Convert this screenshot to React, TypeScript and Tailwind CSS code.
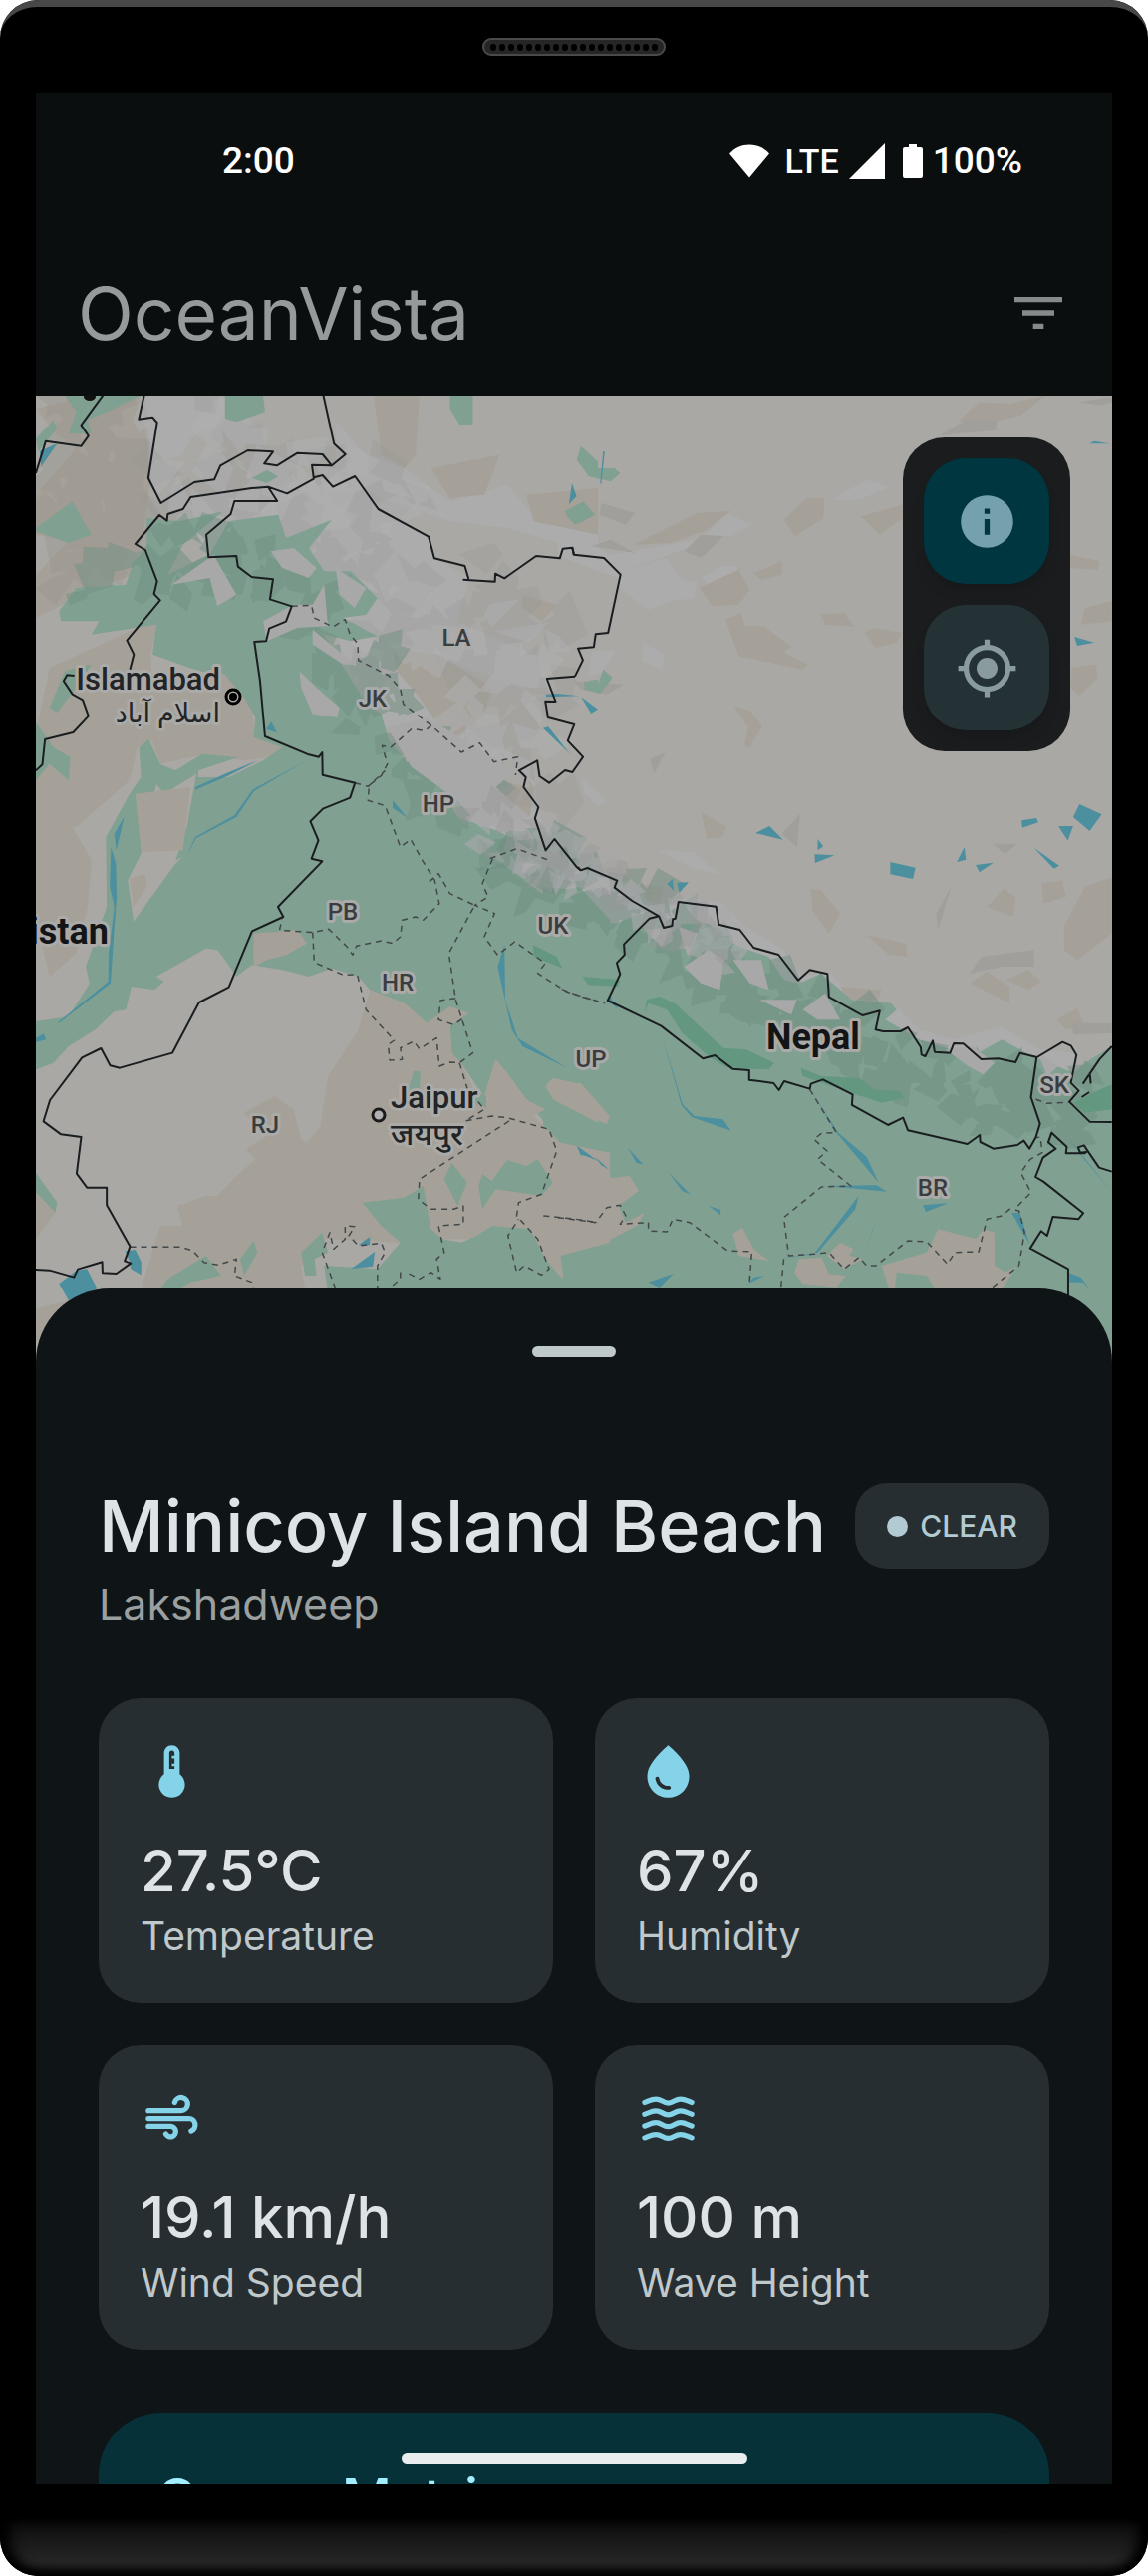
import type { ReactNode } from "react";
import { MdFilterList, MdInfo, MdMyLocation, MdThermostat, MdWaterDrop } from "react-icons/md";

/* ---------- Map ---------- */

// The map is surveyed in two sheets, west and east, each with its own grid.
const WEST = "translate(0 390) scale(0.38265 0.33333)";
const EAST = "translate(560 390) scale(0.37755 0.33333)";

const toPath = (shapes: string[], close: boolean) =>
  shapes.map((s) => `M${s}${close ? "Z" : ""}`).join(" ");

function Areas({ west = [], east = [], fill, opacity = 1 }: { west?: string[]; east?: string[]; fill: string; opacity?: number }) {
  return (
    <g fill={fill} opacity={opacity}>
      <path transform={WEST} d={toPath(west, true)} />
      <path transform={EAST} d={toPath(east, true)} />
    </g>
  );
}

function Lines({ west, east, stroke, width, dash }: { west: string[]; east: string[]; stroke: string; width: number; dash?: string }) {
  return (
    <g fill="none" stroke={stroke} strokeWidth={width} strokeDasharray={dash} strokeLinejoin="round">
      <path transform={WEST} d={toPath(west, false)} vectorEffect="non-scaling-stroke" />
      <path transform={EAST} d={toPath(east, false)} vectorEffect="non-scaling-stroke" />
    </g>
  );
}

// Scatters small relief facets along a mountain spine.
function facets(seed: number, spine: number[][], spread: number, count: number, size: number) {
  let s = seed;
  const rnd = () => {
    s = (s * 16807) % 2147483647;
    return s / 2147483647;
  };
  const out: string[] = [];
  for (let i = 0; i < count; i++) {
    const k = Math.floor(rnd() * (spine.length - 1));
    const t = rnd();
    const x = spine[k][0] + (spine[k + 1][0] - spine[k][0]) * t + (rnd() - 0.5) * spread;
    const y = spine[k][1] + (spine[k + 1][1] - spine[k][1]) * t + (rnd() - 0.5) * spread;
    const pts: string[] = [];
    const turn = rnd() * 6;
    for (let j = 0; j < 4; j++) {
      const a = turn + j * 1.5 + rnd();
      const r = size * (0.3 + rnd());
      pts.push(`${Math.round(x + Math.cos(a) * r)},${Math.round(y + Math.sin(a) * r)}`);
    }
    out.push(`M${pts.join("L")}Z`);
  }
  return out.join("");
}

const karakoram = [[200, 440], [270, 500], [350, 540], [430, 610], [500, 680], [530, 740]];
const hindukush = [[60, 420], [110, 480], [60, 560], [140, 520]];
const kashmir = [[90, 600], [170, 560], [240, 560], [300, 600], [350, 660], [400, 730], [470, 810], [540, 860]];
const nepal = [[510, 870], [600, 890], [660, 930], [720, 970], [780, 1010], [850, 1040], [930, 1080], [1000, 1100], [1100, 1110]];
const himal = [[480, 810], [540, 860], [600, 880], [650, 910], [730, 950]];

const SNOW_W = [
  "380,20 690,20 620,80 500,150 480,200 400,230",
  "430,450 500,330 700,300 830,270 930,265 1000,360 1120,440 1140,510 1230,570 1200,700 1400,800 1450,900 1360,900 1200,830 1050,780 1100,900 1290,1080 1400,1180 1420,1300 1520,1440 1568,1500 1568,1620 1400,1500 1280,1420 1000,1000 900,830 850,550 750,440",
  "880,100 960,200 1060,240 1180,340 1330,290 1400,380 1568,420 1568,520 1480,470 1330,420 1180,400 1000,330 880,260",
];
const SNOW_E = [
  "-40,1380 60,1440 160,1480 270,1570 320,1535 430,1545 500,1620 600,1690 650,1770 720,1755 800,1850 900,1860 960,1930 1050,1960 1180,1920 1280,1990 1380,2000 1360,2060 1100,2040 900,1960 700,1900 560,1800 400,1700 60,1620 -40,1560",
  "160,560 230,530 290,510 330,580 370,580 360,630 300,640 240,665 160,600",
  "0,450 60,450 140,500 440,440 200,540 160,570 60,530 0,500",
  "390,440 450,375 515,410 460,445",
  "380,570 430,535 480,535 460,575 400,590",
  "725,335 820,275 880,297 800,335",
  "265,1390 360,1395 430,1465 350,1440",
  "60,1170 130,1240 110,1260 70,1220",
  "225,765 285,800 275,845 225,820",
  "80,870 90,790 155,790 120,850",
];
const TAN_W = [
  "94,60 240,20 350,20 380,100 395,280 380,400 350,560 250,600 94,690 94,560 180,460 94,440 94,320 200,180 150,140",
  "130,840 400,700 410,720 395,800 400,900 600,860 660,960 670,1050 750,1080 700,1110 640,1120 540,1100 420,1130 400,1060 360,1080 340,1180 200,1320 94,1300 94,1040",
  "94,1200 180,1300 240,1420 230,1560 200,1700 130,1770 94,1600",
  "980,20 1100,20 1090,200 1060,240 1000,200",
  "1130,240 1310,200 1270,320 1180,330",
  "1030,780 1150,800 1290,900 1270,980 1180,1070 1100,930 1040,850",
  "1370,620 1460,650 1420,700 1370,660",
  "1250,1160 1350,1110 1400,1200 1390,1290 1310,1230",
  "1380,320 1568,300 1568,440 1400,400",
];
const TAN_E = [
  "1065,95 1120,40 1200,45 1295,20 1230,80 1100,115",
  "600,395 660,330 708,330 705,390 630,445",
  "520,555 595,520 595,560 540,575",
  "375,600 480,545 510,605 480,650 410,655",
  "445,695 487,675 497,715 545,715 620,775 600,795 665,830 650,845 480,805",
  "697,680 760,675 787,717 710,710",
  "805,385 915,350 915,390 855,440",
  "815,735 840,720 915,735 900,765 845,780",
  "468,955 510,970 543,1015 510,1080 495,1075 505,1020",
  "380,1275 450,1320 435,1350 395,1355",
  "1360,500 1440,520 1435,545 1360,540",
  "1365,840 1430,830 1435,870 1385,925 1362,900",
  "200,470 370,375 460,368 390,430 300,465",
  "1400,660 1472,640 1472,700 1390,710",
  "672,1505 700,1510 750,1580 720,1640 675,1570",
  "1140,1560 1185,1505 1215,1530 1210,1590",
  "1285,1490 1340,1480 1350,1530 1290,1550",
  "820,1645 925,1670 928,1710 880,1705",
  "1345,1620 1400,1500 1472,1470 1472,1640 1380,1720 1345,1690",
  "1095,1790 1140,1755 1200,1800 1200,1850",
  "1190,1780 1250,1750 1285,1785 1250,1810",
  "750,1800 860,1810 850,1840 770,1840",
  "1325,1900 1380,1865 1400,1920 1350,1930",
  "100,1440 150,1410 190,1480 150,1490",
  "220,1490 280,1500 270,1550 235,1540",
];
const SHADE_E = [
  "1015,140 1090,90 1165,95 1165,125",
  "1385,40 1472,25 1472,40 1440,50",
  "335,490 380,440 440,445 380,510",
  "115,345 205,375 180,410 110,380",
  "90,475 140,455 205,495",
  "245,1115 285,1095 255,1160",
  "595,1340 643,1280 635,1380",
  "1155,1370 1220,1370 1188,1402",
  "1095,1760 1125,1710 1265,1690 1265,1740 1180,1740",
  "1010,1630 1005,1580 1045,1500",
  "1365,1910 1472,1910 1472,1940 1370,1945",
  "40,880 175,890 130,920 60,905",
];
const GREEN_W = [
  "385,390 470,400 585,370 480,470 440,560 550,500 600,400 730,380 750,450 870,395 810,480 850,550 920,550 990,630 960,680 900,690 990,745 920,760 850,740 890,820 950,930 1000,980 1020,1060 1080,1140 1150,1190 1200,1290 1300,1330 1400,1380 1280,1400 1340,1450 1420,1520 1520,1500 1600,1600 1600,2290 1470,2270 1380,2140 1330,2060 1300,2020 1270,2130 1250,2100 1210,2030 1185,2000 1180,1920 1120,1910 1060,1850 970,1810 940,1770 870,1745 810,1770 740,1750 660,1735 620,1770 590,1720 570,1690 540,1685 410,1770 430,1785 405,1810 345,1800 330,1870 300,1875 250,1930 180,1980 140,2030 94,2050 94,1905 180,1890 235,1790 225,1740 280,1560 278,1350 340,1220 370,1170 365,1080 390,1055 420,1130 460,1150 530,1100 625,1110 520,1150 520,1170 600,1170 690,1120 740,1080 665,1050 670,990 640,930 590,860 520,850 400,800 410,710 240,740 260,700 160,700 155,670 200,600 330,590 350,520 385,480",
  "590,20 690,20 695,70 620,100 590,90",
  "1180,20 1240,20 1240,108 1205,108 1180,60",
  "170,20 370,20 290,65 230,95 240,135 180,135 200,70",
  "94,420 190,340 210,380 240,440 180,465 94,430",
  "1525,175 1568,220 1568,270 1515,220",
  "660,270 700,245 730,265 700,285",
  "94,1005 140,1080 185,1110 180,1180 130,1130 94,1180",
  "94,150 140,95 150,120 100,190",
  "130,960 170,850 240,830 200,900 150,975",
  "94,2360 150,2450 145,2480 94,2420",
  "1480,370 1530,340 1560,380 1520,405",
  "1540,880 1568,875 1568,905",
];
const GREEN_E = [
  "-40,1500 60,1510 60,1590 150,1610 250,1570 300,1640 330,1610 400,1610 480,1680 560,1710 600,1780 640,1790 700,1760 780,1840 885,1850 900,1870 870,1900 960,1960 1100,2010 1180,1960 1260,2010 1370,2060 1400,2030 1472,1980 1480,2900 -40,2900",
  "50,215 60,175 100,240 150,240 165,255 140,280 82,265",
  "20,380 65,345 95,380 45,410",
  "70,880 105,895 120,845 145,870 112,918 70,905",
];
const PLAIN_W = [
  "345,1480 480,1410 460,1430 350,1605",
  "410,1190 430,1220 515,1160 490,1320 455,1440 380,1530 350,1600 335,1480 370,1400",
];
const TAN2_W = [
  "970,1810 1060,1850 1120,1910 1180,1860 1230,1880 1180,1920 1185,2000 1210,2030 1250,2130 1270,2130 1300,2020 1330,2060 1380,2140 1430,2170 1400,2190 1470,2270 1600,2300 1600,2580 1480,2610 1478,2680 1380,2540 1230,2560 1100,2560 950,2450 1050,2570 850,2560 790,2640 800,2710 370,2710 420,2520 480,2520 465,2460 540,2430 570,2430 620,2370 670,2320 645,2290 700,2250 640,2180 720,2130 770,2170 790,2260 805,2270 840,2220 860,2070 940,1930",
  "665,1640 780,1630 805,1670 750,1705 700,1720 665,1740",
  "1430,2100 1450,2075 1510,2090 1568,2160 1568,2210 1450,2140",
  "355,1220 500,1200 480,1390 370,1395",
  "340,1475 380,1460 385,1500 350,1560",
  "94,2420 145,2480 94,2560",
  "94,2770 200,2740 160,2800 94,2870",
];
const TAN2_E = [
  "-60,2300 40,2300 80,2370 150,2375 190,2370 215,2415 160,2460 180,2510 230,2480 210,2520 90,2590 10,2640 15,2680 -60,2640",
  "0,2100 60,2090 137,2190 130,2215 60,2180",
  "465,2545 490,2525 520,2590 560,2625 480,2610",
  "640,2620 700,2615 720,2665 765,2670 740,2705 650,2695 628,2660",
  "860,2640 980,2600 1010,2530 1110,2560 1130,2530 1160,2540 1160,2640 1190,2660 1220,2640 1180,2710 1000,2705 980,2670 900,2660 895,2710 880,2710",
  "715,2610 750,2570 785,2590 775,2610 810,2620 760,2650",
];
const GREEN2_W = [
  "1085,2055 1103,2055 1100,2110 1070,2110",
  "1240,2110 1275,2130 1275,2165 1230,2140",
  "1165,2380 1185,2330 1225,2390 1200,2460",
  "1255,2400 1265,2365 1290,2385 1330,2322 1380,2340 1410,2320 1450,2390 1420,2430 1300,2410 1265,2470",
  "950,2450 1060,2435 1110,2400 1130,2530 1160,2560 1210,2570 1250,2550 1290,2520 1390,2530 1430,2620 1478,2685 1470,2610 1600,2570 1600,2720 860,2720 850,2640 990,2650 1050,2570 1000,2520",
  "800,2670 790,2600 845,2540 860,2600 825,2620 830,2670",
  "420,2710 440,2680 540,2610 580,2670 500,2690 470,2710",
  "630,2620 665,2565 675,2600 640,2670",
];
const SNOW2_W = [
  "710,490 770,480 830,540 810,570 740,540",
  "690,700 770,650 820,650 850,590 860,715 780,720 700,760",
  "820,725 930,830 900,830 820,770",
  "785,850 830,900 890,960 885,990 820,980 790,900",
  "880,540 960,600 930,660 890,620",
  "1015,1020 1120,990 1350,1150 1300,1200 1390,1290 1260,1320 1200,1240 1080,1140",
  "450,590 560,500 620,620 570,655 550,570",
];
const SNOW2_E = [
  "335,1740 400,1690 440,1720 430,1810 380,1790",
  "465,1720 540,1720 560,1810 510,1790",
  "535,1840 635,1840 620,1885",
  "650,1870 710,1820 750,1900 690,1900",
  "1030,1990 1100,1980 1160,2030 1130,2065 1090,2040",
  "230,1630 300,1620 275,1680",
  "320,1620 370,1640 345,1710",
  "1275,2000 1330,2040 1300,2070",
];
const LUSH_E = [
  "240,1850 230,1880 235,1840 270,1830 310,1850 400,1945 440,1985 500,1990 575,2030 560,2050 450,2045 400,2010 330,1940 290,1870",
  "645,2045 700,2070 800,2075 840,2110 910,2115 920,2135 860,2150 780,2120 650,2070",
  "65,1770 165,1780 160,1800 80,1795",
  "1370,2150 1420,2120 1472,2095 1472,2170 1400,2180",
];
const WATER_W = [
  "104,188 150,166 108,235",
  "712,1003 726,1036 698,1025",
  "512,1200 600,1155 680,1118 600,1165 512,1208",
  "490,1405 512,1350 615,1285 662,1208 800,1122 666,1212 620,1290 514,1354",
  "305,1390 300,1340 326,1288",
  "291,1380 304,1430 306,1530 300,1620 290,1790 155,1910 152,1908 284,1785 285,1700 300,1560 288,1500",
  "94,1955 115,1942 120,1960 94,1968",
  "1030,1240 1068,1292 1030,1262",
  "1432,920 1460,918 1520,925 1432,928",
  "1524,928 1568,965 1550,978",
  "1424,1022 1438,1018 1495,1100",
  "1492,348 1500,285 1512,325",
  "1323,1675 1325,1840 1358,1955 1487,2045 1370,1980 1342,1930 1305,1740",
  "328,2596 355,2592 371,2630 370,2668 343,2650 341,2630",
  "155,2695 200,2655 228,2650 255,2710 180,2745",
  "940,2578 970,2553 970,2578",
  "920,2650 983,2598 978,2642",
  "1513,2280 1568,2325 1525,2305",
];
const WATER_E = [
  "120,189 124,189 115,288 112,285",
  "1412,166 1425,158 1467,166",
  "525,1338 562,1317 598,1358",
  "690,1356 705,1378 690,1390",
  "682,1402 735,1405 683,1428",
  "883,1425 950,1442 943,1476 883,1462",
  "1060,1425 1080,1380 1084,1418",
  "1110,1434 1157,1427 1120,1456",
  "1232,1300 1272,1293 1276,1306 1234,1322",
  "1386,1251 1445,1282 1413,1332 1369,1290",
  "1330,1317 1369,1317 1355,1361",
  "1265,1382 1332,1436 1318,1445",
  "1372,747 1425,764 1380,774",
  "290,1490 305,1475 307,1513",
  "316,1487 347,1486 322,1518",
  "136,1825 160,1868 132,1842",
  "278,1955 331,2155 362,2190 438,2200 460,2234 355,2193 328,2158",
  "670,2110 745,2240 820,2312 852,2390 800,2320 740,2240",
  "705,2400 846,2398 874,2417 778,2407",
  "799,2430 790,2470 690,2600 580,2620 680,2605",
  "844,2508 812,2610 838,2530",
  "969,2458 1037,2452 978,2478",
  "50,2280 88,2310 60,2308",
  "98,2312 137,2352 115,2338",
  "186,2286 227,2336 208,2330",
  "294,2360 352,2426 330,2415",
  "400,2460 432,2472 432,2488",
  "240,2690 307,2664 270,2706",
  "505,2695 520,2675 548,2670",
  "1205,2480 1228,2482 1253,2575 1230,2530",
  "1356,2256 1472,2418 1395,2315",
  "1358,2662 1390,2675 1415,2715 1395,2690 1360,2690",
];
const BORDER_W = [
  "270,20 213,110 232,142 213,173 120,158 94,255",
  "378,20 364,92 400,86 412,102 389,270 422,345 510,282 562,274 578,232 650,186 716,190 693,226 726,232 780,194 846,198 870,232 906,198 876,166 848,20",
  "870,232 818,230 823,272 753,316 703,296 660,300 500,327 480,363 440,378 438,398 418,381 355,468 381,486 412,580 404,618 420,637 333,758 351,800 341,845",
  "703,296 727,339 615,339 605,378 541,440 547,508 620,504 624,536 660,567 716,574 708,634 765,655 750,701 706,722 698,760 667,762 682,880 695,1047 810,1102 836,1109 845,1095 846,1163 931,1187 918,1232 847,1265 814,1303 835,1360 817,1415 845,1423 729,1560 743,1590 661,1633 600,1802 522,1848 452,2000 314,2045 289,2038 265,1986 215,2014 131,2142 114,2206 160,2245 213,2253 201,2363 228,2405 280,2405 280,2458 341,2582 327,2626 343,2633 305,2664 269,2662 268,2629 204,2651 194,2675 130,2654 94,2652",
  "195,864 176,862 167,880 190,920 217,937 232,986 192,1035 118,1056 111,1132 94,1150",
  "823,268 846,261 873,296 931,264 992,363 1124,446 1139,511 1219,534 1229,573",
  "1214,575 1298,581 1299,557 1323,571 1406,504 1468,511 1476,482 1501,479 1505,500",
  "1508,866 1434,873 1457,942 1430,941 1437,990 1506,1011 1489,1060 1529,1109 1501,1155 1482,1149 1440,1187 1415,1167 1409,1120 1361,1150 1379,1170 1373,1200 1412,1260 1403,1294 1431,1390 1454,1356 1512,1440 1523,1450",
];
const BORDER_E = [
  "38,479 42,500 122,510 166,560 133,735 100,739 95,778 53,782 66,817 45,866",
  "52,1440 60,1450 78,1443 157,1481 150,1502 197,1542 268,1588 281,1623 303,1617 305,1597 312,1595 320,1545 420,1559 427,1613 483,1629 520,1683 586,1704 638,1781 669,1750 716,1762 720,1831 809,1887 855,1873 844,1930 864,1935 910,1935 930,1923 964,1983 966,2005 976,2010 996,1963 1001,1997 1042,2000 1052,1971 1077,1972 1125,2019 1170,2017 1216,2028 1228,2000 1273,2013 1341,1967 1363,1978 1378,2006 1363,2090 1384,2114 1359,2147 1413,2207 1472,2208",
  "268,1588 243,1595 175,1673 177,1704 156,1729 165,1763 132,1842 274,1919 385,2017 417,2007 464,2048 508,2052 508,2081 573,2091 587,2112 601,2085 669,2108 672,2093 704,2080 783,2125 781,2157 877,2217 917,2195 930,2233 1088,2274 1121,2247 1122,2268 1157,2288 1221,2277 1238,2264 1253,2288 1270,2254 1281,2213 1257,2133 1272,2013",
  "1472,1980 1440,2018 1395,2093",
  "1413,2060 1416,2092",
  "1392,2133 1412,2118",
  "1472,2357 1438,2345 1405,2290 1398,2278 1382,2284 1388,2300 1404,2298 1400,2302 1350,2302 1352,2282 1312,2240 1303,2269 1323,2288 1289,2315 1269,2373 1290,2387 1396,2482 1383,2500 1315,2493 1300,2550 1284,2536 1255,2588 1356,2650 1356,2730",
];
const STATE_W = [
  "765,655 817,652 824,690 873,717 905,695 918,740 938,767 940,818 1020,864 1050,905 1058,950 1131,1014 1210,1095 1258,1067 1295,1124 1358,1109 1352,1164",
  "1131,1014 1115,1030 1080,1024 1025,1080 1002,1075 1016,1130 1000,1165 968,1195 965,1240 1010,1256 1050,1380 1077,1357 1110,1425 1140,1480 1152,1550 1110,1600 1090,1590 1055,1600 1050,1650 1030,1670 1000,1662 935,1678 925,1705 910,1680 862,1627 820,1637 733,1630 740,1595",
  "931,1187 965,1198 1010,1150",
  "820,1637 824,1727 900,1765 937,1764 960,1870 1034,1962 1018,1975 1022,2022 1055,2020 1050,1985 1085,1965 1100,1988 1145,1955 1152,2040 1180,2028 1205,2030 1240,2000 1195,1840 1177,1700 1245,1555 1180,1520 1150,1460 1125,1485",
  "1195,1835 1155,1842 1150,1900 1190,1915 1215,1895",
  "1292,1415 1265,1490 1280,1530 1245,1555 1297,1580 1270,1650 1305,1705 1350,1665 1430,1730 1410,1760 1485,1815 1568,1845",
  "1285,1415 1355,1385 1440,1420",
  "1205,2030 1225,2105 1270,2170 1220,2205 1290,2190 1330,2195 1440,2230 1460,2295 1420,2425 1360,2450 1355,2490 1410,2560 1440,2650 1420,2668 1375,2640 1355,2660 1332,2550 1360,2500",
  "1335,2205 1100,2380 1097,2440 1130,2470 1190,2470 1215,2460 1215,2515 1150,2520 1165,2600 1145,2620 1155,2680 1130,2660 1100,2680 1065,2660",
  "341,2584 475,2584 505,2595 535,2630 572,2638 620,2620 615,2670 660,2690 665,2710",
  "880,2710 845,2600 865,2540 875,2590 905,2560 905,2520 930,2522 915,2550 940,2580 1000,2572 1010,2600 990,2640 990,2710",
  "1425,2490 1510,2500 1568,2510",
  "1030,2700 1050,2680 1050,2645",
];
const STATE_E = [
  "10,1808 60,1830 125,1850",
  "669,2110 740,2240 700,2242 680,2260 715,2295 690,2320 778,2400 700,2403 600,2495 613,2610 680,2605 720,2600 760,2650 800,2615 820,2640 845,2640 930,2565 980,2568 1035,2635 1055,2600 1118,2598 1140,2500 1180,2490 1200,2470 1225,2475 1240,2540 1225,2640 1150,2710",
  "1222,2460 1257,2420 1230,2360 1255,2320 1287,2300 1282,2253 1270,2255",
  "1270,2140 1300,2152 1360,2148",
  "0,2495 100,2510 130,2465 165,2458 180,2490 165,2515 240,2510 240,2535 290,2538 305,2500 350,2510 450,2595 515,2598 508,2700",
  "600,2620 592,2710",
];

const STATES: [string, number, number][] = [
  ["LA", 458, 648], ["JK", 374, 709], ["HP", 440, 815], ["PB", 344, 923], ["HR", 399, 994],
  ["UK", 555, 937], ["UP", 593, 1071], ["RJ", 266, 1137], ["BR", 936, 1200], ["SK", 1058, 1097],
];

function MapView() {
  return (
    <svg viewBox="36 397 1080 980" preserveAspectRatio="xMidYMin slice" className="block w-full" role="img" aria-label="Map of northern India and Nepal">
      <rect x="0" y="390" width="1152" height="990" fill="#a9a8a4" />
      <Areas west={SNOW_W} east={SNOW_E} fill="#acacad" />
      <Areas west={TAN_W} east={TAN_E} fill="#a5a198" />
      <Areas east={SHADE_E} fill="#a09f9b" />
      <path d={facets(11, karakoram, 150, 90, 28)} fill="#989798" opacity="0.3" />
      <path d={facets(29, karakoram, 130, 60, 24)} fill="#b0b0b2" opacity="0.5" />
      <path d={facets(37, hindukush, 110, 60, 26)} fill="#96928a" opacity="0.3" />
      <Areas west={GREEN_W} east={GREEN_E} fill="#80a092" />
      <path d={facets(51, kashmir, 74, 90, 20)} fill="#6f8f81" opacity="0.5" />
      <path d={facets(67, nepal, 62, 150, 19)} fill="#6c8c7f" opacity="0.45" />
      <Areas west={PLAIN_W} fill="#a9a8a4" />
      <Areas west={TAN2_W} east={TAN2_E} fill="#a5a198" />
      <Areas west={GREEN2_W} fill="#80a092" />
      <Areas west={SNOW2_W} east={SNOW2_E} fill="#a8a8a8" />
      <path d={facets(83, himal, 44, 60, 15)} fill="#a9a8aa" opacity="0.6" />
      <path d={facets(97, himal, 46, 40, 14)} fill="#969697" opacity="0.4" />
      <Areas west={["1398,1675 1460,1710 1475,1745 1400,1710"]} east={LUSH_E} fill="#639780" />
      <Areas west={WATER_W} east={WATER_E} fill="#4c8f9e" />
      <Lines west={STATE_W} east={STATE_E} stroke="#43494b" width={1.5} dash="6 5" />
      <Lines west={BORDER_W} east={BORDER_E} stroke="#1a1d1f" width={2} />
      <ellipse cx="90" cy="398" rx="6" ry="4" fill="#111" />
      <g fontFamily="Roboto, sans-serif" fontWeight="500" stroke="#aaaaa9" strokeWidth="6" strokeLinejoin="round" paintOrder="stroke" fill="#3a3d40">
        <g fontSize="24" textAnchor="middle">
          {STATES.map(([name, x, y]) => (
            <text key={name} x={x} y={y}>{name}</text>
          ))}
        </g>
        <g fontSize="31" fill="#222426">
          <text x="221" y="692" textAnchor="end">Islamabad</text>
          <text x="392" y="1112">Jaipur</text>
          <text x="221" y="725" textAnchor="end" direction="ltr" fontSize="27" fontWeight="400" fontFamily="'Noto Sans', 'DejaVu Sans', sans-serif">اسلام آباد</text>
          <text x="392" y="1149" fontFamily="'Noto Sans', 'Noto Sans Devanagari', sans-serif">जयपुर</text>
        </g>
        <g fontSize="36" fontWeight="700" fill="#131415">
          <text x="109" y="947" textAnchor="end">istan</text>
          <text x="769" y="1053">Nepal</text>
        </g>
      </g>
      <circle cx="234" cy="699" r="7" fill="#a9a8a4" stroke="#000" strokeWidth="3" />
      <circle cx="234" cy="699" r="4" fill="#000" />
      <circle cx="380" cy="1119" r="6" fill="#b0b0b0" stroke="#1a1a1a" strokeWidth="3" />
    </svg>
  );
}

/* ---------- Icons ---------- */

function WindIcon() {
  return (
    <svg viewBox="0 0 24 24" className="size-full" fill="none" stroke="currentColor" strokeWidth="2" strokeLinecap="round" aria-hidden="true">
      <path d="M3 9h12.5a2.5 2.5 0 1 0-2.4-3.1" />
      <path d="M3 12h15.5a2.5 2.5 0 0 1 .9 4.8" />
      <path d="M3 15h8.5a2 2 0 1 1-1.8 2.9" />
    </svg>
  );
}

function WavesIcon() {
  return (
    <svg viewBox="0 0 24 24" className="size-full" fill="none" stroke="currentColor" strokeWidth="2" strokeLinecap="round" aria-hidden="true">
      {[0, 4.5, 9, 13.5].map((y) => (
        <path key={y} transform={`translate(0 ${y})`} d="M3 5.9C4.6 5.5 5.2 4.6 7.3 4.6S10 6.1 12 6.1s2.6-1.5 4.7-1.5 2.7.9 4.3 1.3" />
      ))}
    </svg>
  );
}

/* ---------- Screen ---------- */

function StatusBar() {
  return (
    <div className="flex h-[138px] items-center justify-between pr-[90px] pl-[187px] font-[Roboto,sans-serif] text-[37px] font-medium text-white">
      <time>2:00</time>
      <div className="flex items-center">
        <svg viewBox="0 0 40 34" className="mr-[16px] w-10" fill="currentColor" aria-label="Wi-Fi">
          <path d="M0 9.5C5.500 3.500 12 .5 20 .5S34.500 3.500 40 9.500L20 33.500Z" />
        </svg>
        <span className="text-[34px]">LTE</span>
        <svg viewBox="0 0 36 36" className="ml-[10px] w-9" fill="currentColor" aria-label="Signal">
          <path d="M36 0v36H0Z" />
        </svg>
        <svg viewBox="0 0 20 34" className="mr-[10px] ml-[18px] w-5" fill="currentColor" aria-label="Battery">
          <path d="M6 0h8v3h4a2 2 0 0 1 2 2v27a2 2 0 0 1-2 2H2a2 2 0 0 1-2-2V5a2 2 0 0 1 2-2h4Z" />
        </svg>
        <span>100%</span>
      </div>
    </div>
  );
}

function Metric({ icon, value, label }: { icon: ReactNode; value: string; label: string }) {
  return (
    <article className="rounded-[42px] bg-[#272e31] p-[42px]">
      <div className="size-[63px] text-[#84d3e8]">{icon}</div>
      <p className="mt-[28px] text-[58px] leading-[80px] font-medium text-[#dee3e5]">{value}</p>
      <p className="text-[39px] leading-[51px] text-[#bfc8cb]">{label}</p>
    </article>
  );
}

export default function App() {
  return (
    <div className="flex h-screen flex-col overflow-hidden bg-white font-[Inter,sans-serif]">
      <div className="relative flex min-h-0 flex-1 flex-col overflow-hidden rounded-[38px] bg-black">
        <div className="flex h-[93px] shrink-0 items-center justify-center rounded-t-[38px] border-t-[7px] border-[#484848] pb-[6px]">
          <div className="flex h-[18px] w-[184px] items-center justify-center gap-[3px] rounded-full border-2 border-[#4a4a4a] bg-[#262626]">
            {Array.from({ length: 19 }, (_, i) => (
              <span key={i} className="h-[7px] w-[6px] rounded-full bg-black" />
            ))}
          </div>
        </div>

        <main className="relative mx-9 min-h-0 flex-1 overflow-hidden bg-[#0f1416]">
          <header className="bg-[#0a0e0f]">
            <StatusBar />
            <div className="flex h-[166px] items-center justify-between px-[42px]">
              <h1 className="text-[73px] leading-none text-[#959a9b]">OceanVista</h1>
              <button type="button" aria-label="Filter" className="text-[#858a8c]">
                <MdFilterList className="size-16" />
              </button>
            </div>
          </header>

          <section className="relative">
            <MapView />
            <div className="absolute top-[42px] right-[42px] flex flex-col gap-[21px] rounded-[42px] bg-[#1a1c1d] p-[21px]">
              <button type="button" aria-label="Information" className="flex size-[126px] items-center justify-center rounded-[42px] bg-[#00363f] text-[#75a1ae] shadow-lg">
                <MdInfo className="size-[63px]" />
              </button>
              <button type="button" aria-label="My location" className="flex size-[126px] items-center justify-center rounded-[42px] bg-[#243236] text-[#8a9b9f] shadow-lg">
                <MdMyLocation className="size-[63px]" />
              </button>
            </div>
          </section>

          <section className="relative -mt-[84px] rounded-t-[74px] bg-[#0f1416] px-[63px] pt-[58px]">
            <div className="mx-auto h-[11px] w-[84px] rounded-full bg-[#bfc8cb]" />
            <div className="mt-[126px] flex items-center justify-between">
              <h2 className="text-[72px] leading-[86px] font-medium whitespace-nowrap text-[#dee3e5]">Minicoy Island Beach</h2>
              <span className="flex h-[86px] items-center gap-[12px] rounded-[32px] bg-[#272e31] px-8 text-[30px] font-medium text-[#b2cbd2]">
                <span className="size-[21px] rounded-full bg-[#b2cbd2]" />
                CLEAR
              </span>
            </div>
            <p className="mt-[5px] text-[43px] leading-[62px] text-[#9a9f9f]">Lakshadweep</p>
            <div className="mt-[63px] grid grid-cols-2 gap-[42px]">
              <Metric icon={<MdThermostat className="size-full" />} value="27.5°C" label="Temperature" />
              <Metric icon={<MdWaterDrop className="size-full" />} value="67%" label="Humidity" />
              <Metric icon={<WindIcon />} value="19.1 km/h" label="Wind Speed" />
              <Metric icon={<WavesIcon />} value="100 m" label="Wave Height" />
            </div>
            <div className="mt-[63px] rounded-[63px] bg-[#073138] px-[58px] pt-[48px] pb-[63px]">
              <h3 className="text-[55px] leading-[76px] font-medium text-[#a2eeff]">Ocean Metrics</h3>
            </div>
          </section>

          <div className="absolute inset-x-0 bottom-5 mx-auto h-[11px] w-[347px] rounded-full bg-[#e9eded]" />
        </main>

        <div className="mt-[34px] h-[58px] shrink-0 rounded-b-[38px] bg-linear-to-b from-[#0b0b0b] via-[#262626] via-75% to-[#1b1b1b] shadow-[inset_0_-4px_8px_#000,inset_10px_0_14px_#000,inset_-10px_0_14px_#000]" />
      </div>
    </div>
  );
}
